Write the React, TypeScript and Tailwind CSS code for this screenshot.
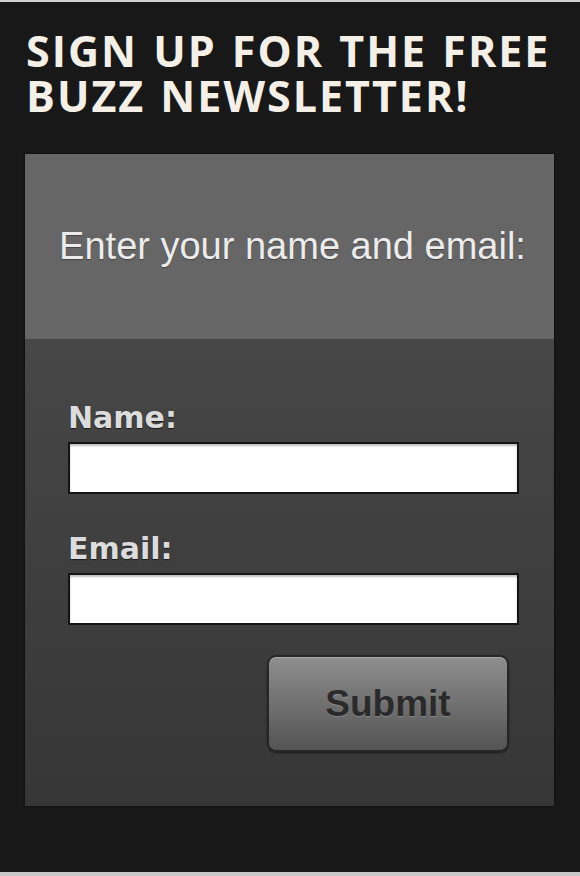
import React from "react";

const Field: React.FC<{ label: string; top: string }> = ({ label, top }) => {
  return (
    <div className={`flex flex-col ${top}`}>
      <label className="font-['DejaVu_Sans',sans-serif] font-bold text-[30px] leading-[30px] text-[#dcdcdc] [text-shadow:0_1px_1px_rgba(0,0,0,0.6)]">
        {label}
      </label>
      <input
        type="text"
        className="mt-[9px] h-[52px] w-[451px] bg-white border-2 border-[#141414] shadow-[inset_0_2px_2px_rgba(0,0,0,0.25)] outline-none"
      />
    </div>
  );
};

const App: React.FC = () => {
  return (
    <div className="w-[580px] h-[876px] bg-[#181818] border-t-2 border-b-4 border-t-[#d0d0d0] border-b-[#c8c8c8] flex flex-col">
      <h1 className="pl-[26px] pt-[26px] font-['Open_Sans',sans-serif] font-bold text-[43px] leading-[45px] tracking-[2px] [word-spacing:2px] text-[#f4f0e8] uppercase">
        Sign up for the free
        <br />
        Buzz newsletter!
      </h1>

      <div className="mt-[36px] ml-[25px] w-[529px] flex flex-col shadow-[0_0_2px_rgba(0,0,0,0.8)]">
        <div className="h-[185px] bg-[#666666] flex items-center justify-center">
          <p className="font-['Liberation_Sans',Arial,sans-serif] text-[38px] text-[#ececec] pl-[6px] [text-shadow:0_1px_1px_rgba(0,0,0,0.35)]">
            Enter your name and email:
          </p>
        </div>

        <form
          className="h-[467px] bg-gradient-to-b from-[#474747] to-[#363636] flex flex-col pl-[43px] pr-[35px]"
          onSubmit={(e) => e.preventDefault()}
        >
          <Field label="Name:" top="mt-[64px]" />
          <Field label="Email:" top="mt-[40px]" />

          <button
            type="submit"
            className="self-end mr-[10px] mt-[30px] w-[242px] h-[97px] rounded-[9px] border-2 border-[#262626] bg-gradient-to-b from-[#8e8e8e] to-[#545454] shadow-[inset_0_1px_0_rgba(255,255,255,0.25),0_1px_2px_rgba(0,0,0,0.5)] font-['Liberation_Sans',Arial,sans-serif] font-bold text-[37px] text-[#2a2a2a] [text-shadow:0_1px_0_rgba(255,255,255,0.2)]"
          >
            Submit
          </button>
        </form>
      </div>
    </div>
  );
};

export default App;
